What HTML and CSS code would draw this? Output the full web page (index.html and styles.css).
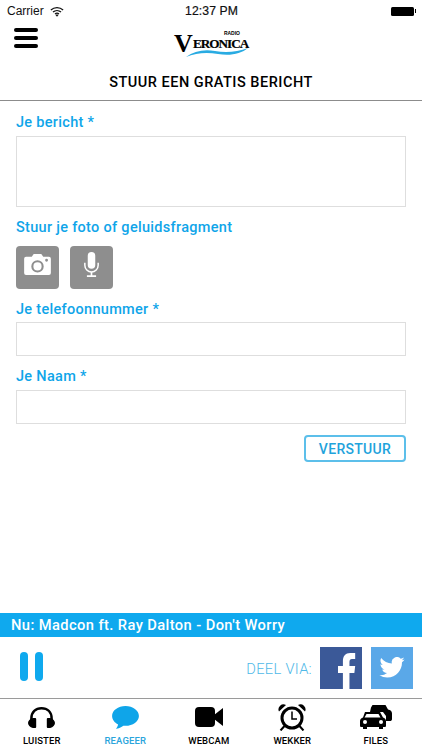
FILE: index.html
```html
<!DOCTYPE html>
<html lang="en">
<head>
    <meta charset="UTF-8">
    <meta name="viewport" content="width=device-width, initial-scale=1.0">
    <title>Radio Veronica</title>
    <link rel="stylesheet" href="styles.css">
</head>
<body>
    <div class="app">
        <div class="statusbar">
            <div class="status-left">
                <span>Carrier</span>
                <svg width="14" height="11" viewBox="0 0 16 12"><path d="M1 4.200C4.900.6 11.100.6 15 4.200M3.400 6.600c2.600-2.300 6.600-2.300 9.200 0M5.700 8.800c1.300-1 3.300-1 4.600 0" fill="none" stroke="#111" stroke-width="1.400"/><path d="M8 12l-1.700-2c1-.7 2.400-.7 3.400 0z" fill="#111"/></svg>
            </div>
            <div class="status-time">12:37 PM</div>
            <div class="status-right"><span class="battery"></span><span class="battery-tip"></span></div>
        </div>

        <div class="topbar">
            <div class="burger"><span></span><span></span><span></span></div>
            <div class="logo">
                <span class="logo-radio">RADIO</span>
                <span class="logo-v">V</span>
                <span class="logo-name">ERONICA</span>
                <svg class="logo-wave" width="62" height="12" viewBox="0 0 62 12"><path d="M0 11C8 5 18 3 29 5c11 2 22 1 33-3-7 6-18 8-30 6C20 6 10 7 0 11z" fill="#29abe2"/></svg>
            </div>
        </div>

        <h1 class="title">STUUR EEN GRATIS BERICHT</h1>

        <form class="form">
            <label class="label">Je bericht *</label>
            <textarea class="field field-big"></textarea>

            <label class="label">Stuur je foto of geluidsfragment</label>
            <div class="media">
                <div class="media-btn">
                    <svg width="27" height="21" viewBox="0 0 28 22"><path fill-rule="evenodd" d="M2 3h6l2-3h8l2 3h6a2 2 0 0 1 2 2v15a2 2 0 0 1-2 2H2a2 2 0 0 1-2-2V5a2 2 0 0 1 2-2zm12 3.500a6.500 6.500 0 1 0 0 13 6.500 6.500 0 0 0 0-13zm0 2.200a4.300 4.300 0 1 1 0 8.600 4.300 4.300 0 0 1 0-8.600zM23.500 5a1.500 1.500 0 1 0 0 3 1.500 1.500 0 0 0 0-3z" fill="#fff"/></svg>
                </div>
                <div class="media-btn">
                    <svg width="15" height="25" viewBox="0 0 18 30"><rect x="4.500" y="0" width="9" height="20" rx="4.500" fill="#fff"/><path d="M1 13v3a8 8 0 0 0 16 0v-3" fill="none" stroke="#fff" stroke-width="1.800"/><path d="M9 24v4M3.500 29h11" fill="none" stroke="#fff" stroke-width="2"/></svg>
                </div>
            </div>

            <label class="label label-tight">Je telefoonnummer *</label>
            <input class="field" type="text">

            <label class="label">Je Naam *</label>
            <input class="field" type="text">

            <div class="send-row">
                <button class="send" type="button">VERSTUUR</button>
            </div>
        </form>

        <div class="nowplaying">Nu: Madcon ft. Ray Dalton - Don't Worry</div>

        <div class="player">
            <div class="pause"><span></span><span></span></div>
            <div class="share">
                <span class="share-text">DEEL VIA:</span>
                <div class="social fb">
                    <svg width="18" height="36" viewBox="0 0 22 36" preserveAspectRatio="none"><path d="M14 36V20h6l1-7h-7V9c0-2 1-3 3-3h4V0h-6C9 0 6 3 6 8v5H0v7h6v16z" fill="#fff"/></svg>
                </div>
                <div class="social tw">
                    <svg width="26" height="21" viewBox="0 0 24 20"><path d="M24 2.400c-.9.400-1.800.7-2.800.8 1-.6 1.800-1.600 2.200-2.700-1 .6-2 1-3.100 1.200A4.900 4.900 0 0 0 11.900 6.200C7.800 6 4.200 4 1.700.9c-1.300 2.200-.7 5.100 1.500 6.600-.8 0-1.600-.2-2.200-.6 0 2.300 1.600 4.400 3.900 4.900-.7.200-1.500.2-2.200.1.600 2 2.400 3.400 4.600 3.400A9.900 9.900 0 0 1 0 17.300 14 14 0 0 0 7.500 19.500c9.100 0 14.300-7.700 14-14.600 1-.7 1.800-1.500 2.500-2.500z" fill="#fff"/></svg>
                </div>
            </div>
        </div>

        <nav class="tabs">
            <div class="tab">
                <div class="tab-icon"><svg width="27" height="21" viewBox="0 0 28 22" preserveAspectRatio="none"><path d="M3.500 15V12C3.500 5 8 1.300 14 1.300S24.500 5 24.500 12v3" fill="none" stroke="#000" stroke-width="2.600"/><path d="M5 11.500h2.500a1 1 0 0 1 1 1V21a1 1 0 0 1-1 1H5c-3-.5-5-3-5-5.200s2-4.800 5-5.300zM23 11.500h-2.500a1 1 0 0 0-1 1V21a1 1 0 0 0 1 1H23c3-.5 5-3 5-5.200s-2-4.800-5-5.300z" fill="#000"/></svg></div>
                <span>LUISTER</span>
            </div>
            <div class="tab tab-active">
                <div class="tab-icon"><svg width="27" height="23" viewBox="0 0 28 24"><path d="M14 0C6.300 0 0 4.600 0 10.400c0 3.700 2.500 6.900 6.300 8.800-.4 1.800-1.400 3.400-2.300 4.600 2.900-.3 5.800-1.800 7.800-3.200.7.100 1.400.1 2.200.1 7.700 0 14-4.600 14-10.300S21.700 0 14 0z" fill="#0fa5e9"/></svg></div>
                <span>REAGEER</span>
            </div>
            <div class="tab">
                <div class="tab-icon"><svg width="28" height="20" viewBox="0 0 28 20"><rect x="0" y="0" width="20" height="20" rx="4" fill="#000"/><path d="M19 8l9-7v18l-9-7z" fill="#000"/></svg></div>
                <span>WEBCAM</span>
            </div>
            <div class="tab">
                <div class="tab-icon"><svg width="28" height="27" viewBox="0 0 28 27"><circle cx="14" cy="14" r="11.500" fill="#000"/><circle cx="14" cy="14" r="8.500" fill="#fff"/><path d="M14 7.500V15h5" fill="none" stroke="#000" stroke-width="1.500"/><path d="M1 7.500A5 5 0 0 1 8 1zM27 7.500A5 5 0 0 0 20 1z" fill="#000"/><path d="M6.500 22L2.500 26.500M21.500 22l4 4.500" stroke="#000" stroke-width="2"/></svg></div>
                <span>WEKKER</span>
            </div>
            <div class="tab">
                <div class="tab-icon"><svg width="32" height="24" viewBox="0 0 32 24"><path d="M11 2.500 12.500 0h13l2.500 4.500c2.500.5 4 1.500 4 4V14c0 1.500-1 2-2 2H26v-5l-3-4H10z" fill="#000"/><path d="M5 7h15l3 5.500c1.500.4 3 1.500 3 3.500v4.500c0 1-.5 1.500-1.500 1.500H23v2h-4v-2H7v2H3v-2H1.500C.5 22 0 21.500 0 20.500V16c0-2 1.500-3.100 3-3.500z" fill="#000"/><path d="M6.500 9h12l2 3.500h-16z" fill="#fff"/><circle cx="5" cy="17" r="2" fill="#fff"/><circle cx="21" cy="17" r="2" fill="#fff"/></svg></div>
                <span>FILES</span>
            </div>
        </nav>
    </div>
</body>
</html>
```

FILE: styles.css
```css
* {
    margin: 0;
    padding: 0;
    box-sizing: border-box;
}
body {
    font-family: 'Roboto', 'Liberation Sans', sans-serif;
    background: #fff;
    color: #000;
}
.app {
    width: 422px;
    height: 750px;
    display: flex;
    flex-direction: column;
    overflow: hidden;
}
.statusbar {
    height: 20px;
    display: flex;
    align-items: center;
    padding: 2px 6px 0 7px;
    font-family: 'Liberation Sans', sans-serif;
    font-size: 12px;
    color: #111;
    flex-shrink: 0;
}
.status-left {
    flex: 1;
    display: flex;
    align-items: center;
    gap: 6px;
}
.status-time {
    font-size: 12.200px;
    letter-spacing: 0.1px;
    -webkit-text-stroke: 0.2px #111;
}
.status-right {
    flex: 1;
    display: flex;
    align-items: center;
    justify-content: flex-end;
}
.battery {
    width: 23px;
    height: 9px;
    background: #000;
    border-radius: 1.500px;
}
.battery-tip {
    width: 1.500px;
    height: 4px;
    margin-left: 1px;
    background: #000;
}
.topbar {
    height: 42px;
    position: relative;
    display: flex;
    justify-content: center;
    flex-shrink: 0;
}
.burger {
    position: absolute;
    left: 14px;
    top: 8px;
    width: 24px;
    display: flex;
    flex-direction: column;
    gap: 4px;
}
.burger span {
    height: 4px;
    background: #000;
    border-radius: 2px;
}
.logo {
    width: 74px;
    height: 28px;
    margin-top: 10px;
    position: relative;
    color: #000;
    font-family: 'Liberation Serif', serif;
    font-weight: bold;
}
.logo-radio {
    position: absolute;
    top: 1px;
    right: 8px;
    font-family: 'Liberation Sans', sans-serif;
    font-size: 5px;
    line-height: 5px;
}
.logo-v {
    position: absolute;
    left: 0;
    top: 1px;
    font-size: 26px;
    line-height: 26px;
}
.logo-name {
    position: absolute;
    left: 19px;
    top: 6px;
    font-size: 13.200px;
    line-height: 15px;
    letter-spacing: -1px;
    white-space: nowrap;
    -webkit-text-stroke: 0.2px #000;
}
.logo-wave {
    position: absolute;
    left: 12px;
    top: 16px;
}
.title {
    height: 39px;
    line-height: 41px;
    text-align: center;
    font-size: 14.500px;
    font-weight: 500;
    letter-spacing: 0.5px;
    border-bottom: 1px solid #8c8c8c;
    flex-shrink: 0;
}
.form {
    flex: 1;
    padding: 11px 16px 0;
    display: flex;
    flex-direction: column;
}
.label {
    font-size: 14.500px;
    line-height: 22px;
    font-weight: 500;
    letter-spacing: 0.3px;
    color: #0fa5e9;
    margin-bottom: 2px;
}
.label-tight {
    margin-bottom: 1px;
}
.field {
    display: block;
    width: 100%;
    height: 34px;
    border: 1px solid #dedede;
    background: #fff;
    margin-bottom: 10px;
    resize: none;
}
.field-big {
    height: 71px;
}
.media {
    display: flex;
    gap: 11px;
    margin-top: 5px;
    margin-bottom: 10px;
}
.media-btn {
    width: 43px;
    height: 43px;
    padding-bottom: 6px;
    border-radius: 4px;
    background: #8e8e8e;
    display: flex;
    align-items: center;
    justify-content: center;
}
.send-row {
    display: flex;
    justify-content: flex-end;
    margin-top: 1px;
}
.send {
    width: 102px;
    height: 27px;
    background: #fff;
    border: 2px solid #5cbfea;
    border-radius: 4px;
    color: #1fa3dc;
    font-family: inherit;
    font-size: 14px;
    font-weight: 500;
    letter-spacing: 0.3px;
}
.nowplaying {
    height: 24px;
    line-height: 25px;
    padding-left: 11px;
    background: #0fa9ee;
    color: #fff;
    font-size: 14.700px;
    font-weight: 500;
    letter-spacing: 0.4px;
    flex-shrink: 0;
}
.player {
    height: 62px;
    display: flex;
    align-items: center;
    justify-content: space-between;
    padding: 0 9px 0 20px;
    border-bottom: 1px solid #9a9a9a;
    flex-shrink: 0;
}
.pause {
    display: flex;
    gap: 7px;
    margin-bottom: 2px;
}
.pause span {
    width: 8px;
    height: 29px;
    background: #0fa9ee;
    border-radius: 4px;
}
.share {
    display: flex;
    align-items: center;
}
.share-text {
    color: #4fb9e8;
    font-size: 14.700px;
    font-weight: 300;
    letter-spacing: 0.3px;
    margin-right: 8px;
    margin-top: 3px;
}
.social {
    width: 42px;
    height: 42px;
    display: flex;
    align-items: flex-end;
    justify-content: center;
}
.fb {
    background: #3b5998;
    margin-right: 9px;
}
.fb svg {
    margin-left: 11px;
}
.tw {
    background: #5aa8e8;
    align-items: center;
}
.tabs {
    height: 51px;
    flex-shrink: 0;
    display: grid;
    grid-template-columns: repeat(5, 83.500px);
}
.tab {
    display: flex;
    flex-direction: column;
    align-items: center;
    padding-top: 4px;
    font-size: 9.500px;
    font-weight: 500;
    letter-spacing: 0.1px;
    line-height: 12px;
}
.tab-icon {
    height: 28px;
    margin-bottom: 4px;
    display: flex;
    align-items: center;
}
.tab-active {
    color: #2aa5dc;
}
```
